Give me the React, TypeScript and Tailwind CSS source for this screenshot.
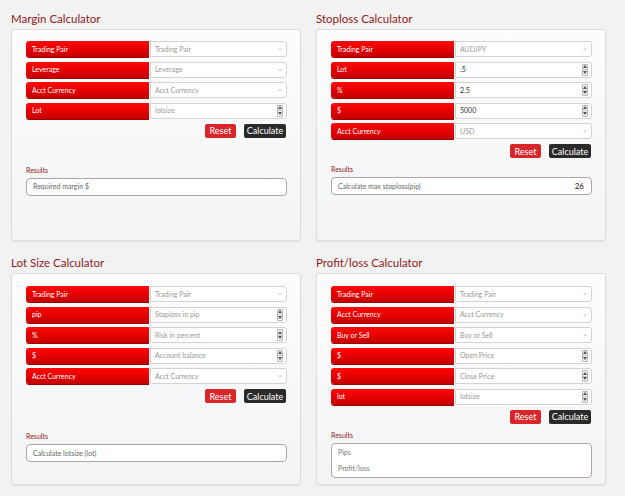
import React from "react";

type Field = { label: string; kind: "select" | "number"; value?: string; placeholder?: string };

type Calc = {
  title: string;
  fields: Field[];
  padTop: string;
  resultsGap: string;
  results: React.ReactNode;
};

function Caret() {
  return (
    <svg width="4" height="2" viewBox="0 0 4 2" className="shrink-0 mr-[1px]">
      <path d="M0.5 0.3 L2 1.7 L3.5 0.3" fill="none" stroke="#a0a0a0" strokeWidth="0.7" />
    </svg>
  );
}

function Spinner() {
  return (
    <div className="flex flex-col shrink-0 w-[6px] h-[12px] border border-[#b5b5b5] bg-[#f1f1f1] rounded-[1px]">
      <div className="flex-1 flex items-center justify-center border-b border-[#c4c4c4]">
        <svg width="4" height="3" viewBox="0 0 4 3">
          <path d="M0 3 L2 0 L4 3 Z" fill="#555" />
        </svg>
      </div>
      <div className="flex-1 flex items-center justify-center">
        <svg width="4" height="3" viewBox="0 0 4 3">
          <path d="M0 0 L2 3 L4 0 Z" fill="#555" />
        </svg>
      </div>
    </div>
  );
}

function Row({ f }: { f: Field }) {
  const tone = f.value ? (f.kind === "select" ? "text-[#9a9a9a]" : "text-[#333]") : "text-[#999]";
  return (
    <div className="flex h-[16px] gap-[1px]">
      <div className="w-[123px] shrink-0 rounded-l-[3px] bg-gradient-to-b from-[#ff0a0a] via-[#e60000] to-[#c20000] text-white text-[7px] flex items-center pl-[6px] shadow-[0_1px_0_#9d0000]">
        {f.label}
      </div>
      <div className="flex-1 bg-white border border-[#d3d3d3] rounded-r-[3px] flex items-center pl-[4px] pr-[3px] text-[7px]">
        <span className={`flex-1 ${tone}`}>{f.value ?? f.placeholder}</span>
        {f.kind === "select" ? <Caret /> : <Spinner />}
      </div>
    </div>
  );
}

function Panel({ c }: { c: Calc }) {
  return (
    <div>
      <div className="h-[29px] flex items-end pb-[5px]">
        <h2 className="text-[11.5px] leading-none text-[#8e1b1b]">{c.title}</h2>
      </div>
      <div className={`h-[212px] rounded-[3px] border border-[#dcdcdc] bg-gradient-to-b from-[#fdfdfd] to-[#f3f4f6] shadow-[0_1px_2px_rgba(0,0,0,0.06)] pl-[14px] pr-[13px] ${c.padTop}`}>
        <div className="flex flex-col gap-[4.5px]">
          {c.fields.map((f, i) => (
            <Row key={i} f={f} />
          ))}
        </div>
        <div className="flex justify-end gap-[8px] mt-[5px] pr-[1px]">
          <button className="h-[14px] w-[31px] rounded-[2px] bg-[#d9262b] text-white text-[9px] leading-none">Reset</button>
          <button className="h-[14px] w-[42px] rounded-[2px] bg-[#2a2a2a] text-white text-[9px] leading-none">Calculate</button>
        </div>
        <div className={c.resultsGap}>
          <div className="h-[10px] text-[7px] text-[#8e1b1b] mb-[3px] leading-[10px]">Results</div>
          {c.results}
        </div>
      </div>
    </div>
  );
}

const single = (text: string, right?: string) => (
  <div className="h-[18px] bg-white border border-[#b9a2a4] rounded-[4px] flex items-center px-[6px] text-[7px] text-[#666]">
    <span className="flex-1">{text}</span>
    {right && <span className="text-[#222] text-[8px] pr-[1px]">{right}</span>}
  </div>
);

const calcs: Calc[] = [
  {
    title: "Margin Calculator",
    padTop: "pt-[11px]",
    resultsGap: "mt-[27px]",
    fields: [
      { label: "Trading Pair", kind: "select", placeholder: "Trading Pair" },
      { label: "Leverage", kind: "select", placeholder: "Leverage" },
      { label: "Acct Currency", kind: "select", placeholder: "Acct Currency" },
      { label: "Lot", kind: "number", placeholder: "lotsize" },
    ],
    results: single("Required margin $"),
  },
  {
    title: "Stoploss Calculator",
    padTop: "pt-[11px]",
    resultsGap: "mt-[6px]",
    fields: [
      { label: "Trading Pair", kind: "select", value: "AUDJPY" },
      { label: "Lot", kind: "number", value: ".5" },
      { label: "%", kind: "number", value: "2.5" },
      { label: "$", kind: "number", value: "5000" },
      { label: "Acct Currency", kind: "select", value: "USD" },
    ],
    results: single("Calculate max stoploss(pip)", "26"),
  },
  {
    title: "Lot Size Calculator",
    padTop: "pt-[12px]",
    resultsGap: "mt-[28px]",
    fields: [
      { label: "Trading Pair", kind: "select", placeholder: "Trading Pair" },
      { label: "pip", kind: "number", placeholder: "Stoploss in pip" },
      { label: "%", kind: "number", placeholder: "Risk in percent" },
      { label: "$", kind: "number", placeholder: "Account balance" },
      { label: "Acct Currency", kind: "select", placeholder: "Acct Currency" },
    ],
    results: single("Calculate lotsize (lot)"),
  },
  {
    title: "Profit/loss Calculator",
    padTop: "pt-[12px]",
    resultsGap: "mt-[6px]",
    fields: [
      { label: "Trading Pair", kind: "select", placeholder: "Trading Pair" },
      { label: "Acct Currency", kind: "select", placeholder: "Acct Currency" },
      { label: "Buy or Sell", kind: "select", placeholder: "Buy or Sell" },
      { label: "$", kind: "number", placeholder: "Open Price" },
      { label: "$", kind: "number", placeholder: "Close Price" },
      { label: "lot", kind: "number", placeholder: "lotsize" },
    ],
    results: (
      <div className="h-[35px] bg-white border border-[#b9a2a4] rounded-[4px] flex flex-col justify-center gap-[9px] px-[6px] text-[7px] text-[#777] leading-none">
        <span>Pips</span>
        <span>Profit/loss</span>
      </div>
    ),
  },
];

export default function App() {
  return (
    <div className="w-[625px] h-[496px] bg-[#f2f2f2] overflow-hidden font-['Lato','Liberation_Sans',sans-serif] pl-[11px] pr-[19px]">
      <div className="grid grid-cols-2 gap-x-[15px] gap-y-[3px]">
        {calcs.map((c, i) => (
          <Panel key={i} c={c} />
        ))}
      </div>
    </div>
  );
}
